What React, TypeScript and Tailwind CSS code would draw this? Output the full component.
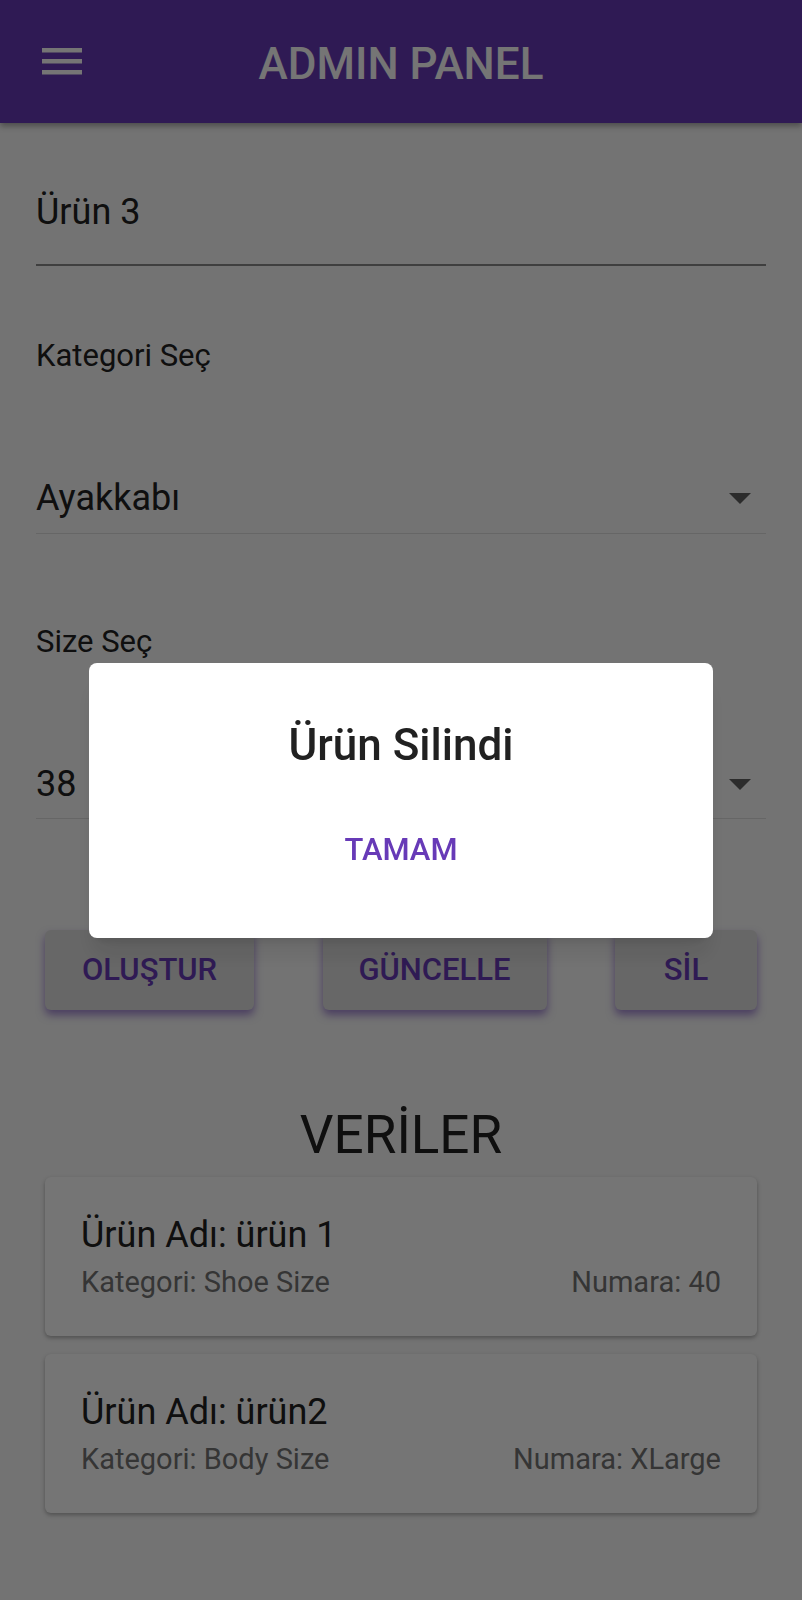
const Caret = () => (
  <svg width="22" height="11" viewBox="0 0 22 11" className="mr-[15px]">
    <path d="M0 0h22L11 11z" fill="#616161" />
  </svg>
);

const products = [
  { name: "ürün 1", category: "Shoe Size", size: "40" },
  { name: "ürün2", category: "Body Size", size: "XLarge" },
];

const App = () => {
  return (
    <div className="relative min-h-screen bg-[#fafafa] font-['Roboto',sans-serif] text-[#212121]">
      <header className="flex h-[123px] items-center bg-[#673ab7] shadow-[0_3px_6px_rgba(0,0,0,0.35)]">
        <div className="w-[82px] pl-[42px]">
          <svg width="40" height="27" viewBox="0 0 40 27">
            <rect y="0" width="40" height="4.5" fill="#ffffff" />
            <rect y="11" width="40" height="4.5" fill="#ffffff" />
            <rect y="22" width="40" height="4.5" fill="#ffffff" />
          </svg>
        </div>
        <h1 className="mt-[4px] flex-1 text-center text-[44px] font-medium leading-[52px] text-white">
          ADMIN PANEL
        </h1>
        <div className="w-[82px]" />
      </header>

      <main className="px-9">
        <div className="border-b-2 border-[#8a8a8a] pt-[69px] pb-[32px] text-[36px] leading-[40px]">
          Ürün 3
        </div>

        <p className="mt-[72px] text-[31px] leading-[36px]">Kategori Seç</p>
        <div className="mt-[104px] flex items-center justify-between border-b border-[#dedede] pb-[15px] text-[36px] leading-[40px]">
          <span>Ayakkabı</span>
          <Caret />
        </div>

        <p className="mt-[90px] text-[31px] leading-[36px]">Size Seç</p>
        <div className="mt-[104px] flex items-center justify-between border-b border-[#dedede] pb-[14px] text-[36px] leading-[40px]">
          <span>38</span>
          <Caret />
        </div>

        <div className="mt-[111px] flex justify-between px-[9px]">
          {[
            ["OLUŞTUR", "w-[209px]"],
            ["GÜNCELLE", "w-[224px]"],
            ["SİL", "w-[142px]"],
          ].map(([label, width]) => (
            <button
              key={label}
              className={`${width} h-[80px] rounded-[6px] bg-[#e0e0e0] text-[31px] font-medium text-[#673ab7] shadow-[0_5px_8px_rgba(103,58,183,0.6)]`}
            >
              {label}
            </button>
          ))}
        </div>

        <h2 className="mt-[95px] text-center text-[53px] leading-[60px]">VERİLER</h2>

        <div className="mt-[12px] flex flex-col gap-[18px] px-[9px] pb-10">
          {products.map((p) => (
            <div
              key={p.name}
              className="rounded-[6px] bg-white px-9 pt-[38px] pb-[37px] shadow-[0_2px_4px_rgba(0,0,0,0.3)]"
            >
              <div className="text-[36px] leading-[40px]">Ürün Adı: {p.name}</div>
              <div className="mt-[10px] flex justify-between text-[29px] leading-[34px] text-[#757575]">
                <span>Kategori: {p.category}</span>
                <span>Numara: {p.size}</span>
              </div>
            </div>
          ))}
        </div>
      </main>

      <div className="fixed inset-0 flex items-center justify-center bg-black/[0.54]">
        <div className="flex w-[624px] flex-col items-center rounded-[8px] bg-white pt-[56px] pb-[70px] shadow-xl">
          <div className="text-[44px] font-medium leading-[52px] text-[#212121]">Ürün Silindi</div>
          <button className="mt-[61px] text-[31px] font-medium leading-[36px] text-[#673ab7]">
            TAMAM
          </button>
        </div>
      </div>
    </div>
  );
};

export default App;
